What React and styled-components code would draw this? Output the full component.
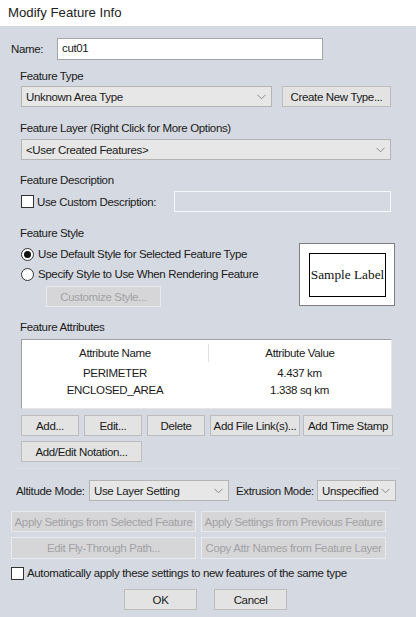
import React from 'react';
import styled, { createGlobalStyle } from 'styled-components';

const GlobalStyle = createGlobalStyle`
  body {
    margin: 0;
    background: #d5d9e1;
    font-family: "Liberation Sans", Arial, sans-serif;
    font-size: 11.5px;
    letter-spacing: -0.35px;
    color: #1a1a1a;
  }
`;

const Dialog = styled.div`
  width: 416px;
  height: 617px;
  background: #d5d9e1;
  overflow: hidden;
`;

const TitleBar = styled.div`
  height: 26px;
  line-height: 25px;
  background: #fff;
  padding-left: 8px;
  font-size: 13.2px;
  letter-spacing: 0;
  color: #222;
`;

const Row = styled.div`
  display: flex;
  align-items: center;
  margin-top: ${p => p.$top || 0}px;
  padding-left: ${p => p.$left || 0}px;
  height: ${p => p.$h || 21}px;
`;

const Label = styled.div`
  height: 14px;
  line-height: 14px;
  margin-top: ${p => p.$top || 0}px;
  padding-left: ${p => p.$left || 20}px;
  white-space: nowrap;
`;

const Text = styled.span`
  white-space: nowrap;
  width: ${p => (p.$w ? p.$w + 'px' : 'auto')};
  margin-left: ${p => p.$ml || 0}px;
  flex: none;
`;

const TextInput = styled.div`
  box-sizing: border-box;
  width: ${p => p.$w}px;
  height: ${p => p.$h || 22}px;
  margin-left: ${p => p.$ml || 0}px;
  background: ${p => (p.$disabled ? 'transparent' : '#fff')};
  border: 1px solid ${p => (p.$disabled ? '#f6f7f9' : '#a2a4a8')};
  padding-left: 4px;
  line-height: 19px;
`;

const SelectBox = styled.div`
  box-sizing: border-box;
  display: flex;
  align-items: center;
  justify-content: space-between;
  width: ${p => p.$w}px;
  height: 21px;
  margin-left: ${p => p.$ml || 0}px;
  background: #e7e7e7;
  border: 1px solid #b4b4b4;
  padding: 0 5px 0 4px;
  white-space: nowrap;
  flex: none;
`;

const Button = styled.div`
  box-sizing: border-box;
  display: flex;
  align-items: center;
  justify-content: center;
  width: ${p => p.$w}px;
  height: ${p => p.$h || 21}px;
  margin-left: ${p => p.$ml || 0}px;
  background: ${p => (p.$disabled ? '#d6d6d8' : '#e3e3e3')};
  border: 1px solid ${p => (p.$disabled ? '#e9eaee' : '#bcbcbc')};
  color: ${p => (p.$disabled ? '#a2a2a4' : '#1a1a1a')};
  white-space: nowrap;
  flex: none;
`;

const Check = styled.span`
  box-sizing: border-box;
  display: inline-block;
  width: 13px;
  height: 13px;
  background: #fff;
  border: 1px solid #333;
  flex: none;
`;

const Radio = styled.span`
  box-sizing: border-box;
  display: inline-flex;
  align-items: center;
  justify-content: center;
  width: 13px;
  height: 13px;
  border-radius: 50%;
  background: #fff;
  border: 1px solid #333;
  flex: none;

  &::after {
    content: '';
    width: 7px;
    height: 7px;
    border-radius: 50%;
    background: ${p => (p.$on ? '#111' : 'transparent')};
  }
`;

const StyleRow = styled.div`
  display: flex;
  margin-top: 1px;
  padding-left: 21px;
  width: 395px;
  box-sizing: border-box;
`;

const RadioColumn = styled.div`
  flex: 1;
  padding-top: 3px;
`;

const RadioRow = styled.div`
  display: flex;
  align-items: center;
  height: 20px;
  gap: 4px;
`;

const SampleFrame = styled.div`
  box-sizing: border-box;
  width: 96px;
  height: 63px;
  margin-top: 2px;
  background: #fff;
  border: 1px solid #7e7e80;
  padding: 9px 8px 9px 9px;
`;

const SampleInner = styled.div`
  box-sizing: border-box;
  height: 44px;
  border: 1px solid #000;
  display: flex;
  align-items: center;
  justify-content: center;
  font-family: "Liberation Serif", "Times New Roman", serif;
  font-size: 13.3px;
  letter-spacing: 0;
  color: #111;
`;

const Table = styled.div`
  box-sizing: border-box;
  margin: 5px 0 0 21px;
  width: 371px;
  height: 70px;
  background: #fff;
  border: 1px solid #a0a0a4;
  border-right-color: #e6e6e6;
  border-bottom-color: #e6e6e6;
  padding-top: 4px;
  text-align: center;
`;

const TableRow = styled.div`
  display: grid;
  grid-template-columns: 186px 1fr;
  height: ${p => p.$h || 17}px;
  line-height: ${p => p.$h || 17}px;
  margin-bottom: ${p => p.$mb || 0}px;
`;

const HeadCell = styled.div`
  border-left: ${p => (p.$divider ? '1px solid #e2e2e2' : 'none')};
`;

const Separator = styled.div`
  margin: 6px 0 0 16px;
  width: 384px;
  height: 1px;
  background: #e0e3e9;
`;

const Chevron = () => (
  <svg width="9" height="6" viewBox="0 0 9 6">
    <path d="M0.5 0.8 L4.5 4.8 L8.5 0.8" fill="none" stroke="#8a8a8a" strokeWidth="1" />
  </svg>
);

const Select = ({ w, ml, children }) => (
  <SelectBox $w={w} $ml={ml}>
    <span>{children}</span>
    <Chevron />
  </SelectBox>
);

export default function App() {
  return (
    <Dialog>
      <GlobalStyle />
      <TitleBar>Modify Feature Info</TitleBar>

      <Row $top={12} $left={11} $h={22}>
        <Text $w={46}>Name:</Text>
        <TextInput $w={266}>cut01</TextInput>
      </Row>

      <Label $top={9}>Feature Type</Label>
      <Row $top={3} $left={21}>
        <Select w={251}>Unknown Area Type</Select>
        <Button $w={109} $ml={10}>Create New Type...</Button>
      </Row>

      <Label $top={14}>Feature Layer (Right Click for More Options)</Label>
      <Row $top={4} $left={21}>
        <Select w={370}>&lt;User Created Features&gt;</Select>
      </Row>

      <Label $top={13}>Feature Description</Label>
      <Row $top={4} $left={21}>
        <Check />
        <Text $w={137} $ml={3}>Use Custom Description:</Text>
        <TextInput $w={217} $h={21} $disabled />
      </Row>

      <Label $top={14}>Feature Style</Label>
      <StyleRow>
        <RadioColumn>
          <RadioRow>
            <Radio $on />
            <span>Use Default Style for Selected Feature Type</span>
          </RadioRow>
          <RadioRow>
            <Radio />
            <span>Specify Style to Use When Rendering Feature</span>
          </RadioRow>
          <Row $top={2} $left={25}>
            <Button $w={115} $disabled>Customize Style...</Button>
          </Row>
        </RadioColumn>
        <SampleFrame>
          <SampleInner>Sample Label</SampleInner>
        </SampleFrame>
      </StyleRow>

      <Label $top={13}>Feature Attributes</Label>
      <Table>
        <TableRow $h={18} $mb={3}>
          <HeadCell>Attribute Name</HeadCell>
          <HeadCell $divider>Attribute Value</HeadCell>
        </TableRow>
        <TableRow>
          <div>PERIMETER</div>
          <div>4.437 km</div>
        </TableRow>
        <TableRow>
          <div>ENCLOSED_AREA</div>
          <div>1.338 sq km</div>
        </TableRow>
      </Table>

      <Row $top={6} $left={21}>
        <Button $w={58}>Add...</Button>
        <Button $w={58} $ml={5}>Edit...</Button>
        <Button $w={58} $ml={5}>Delete</Button>
        <Button $w={90} $ml={5}>Add File Link(s)...</Button>
        <Button $w={90} $ml={3}>Add Time Stamp</Button>
      </Row>
      <Row $top={5} $left={21}>
        <Button $w={121}>Add/Edit Notation...</Button>
      </Row>

      <Separator />

      <Row $top={11} $left={16}>
        <Text $w={73}>Altitude Mode:</Text>
        <Select w={140}>Use Layer Setting</Select>
        <Text $w={81} $ml={7}>Extrusion Mode:</Text>
        <Select w={79}>Unspecified</Select>
      </Row>

      <Row $top={10} $left={11}>
        <Button $w={185} $disabled>Apply Settings from Selected Feature</Button>
        <Button $w={185} $ml={5} $disabled>Apply Settings from Previous Feature</Button>
      </Row>
      <Row $top={5} $left={11} $h={22}>
        <Button $w={185} $h={22} $disabled>Edit Fly-Through Path...</Button>
        <Button $w={185} $h={22} $ml={5} $disabled>Copy Attr Names from Feature Layer</Button>
      </Row>

      <Row $top={7} $left={11} $h={14}>
        <Check />
        <Text $ml={3}>Automatically apply these settings to new features of the same type</Text>
      </Row>

      <Row $top={9} $left={124}>
        <Button $w={73}>OK</Button>
        <Button $w={73} $ml={17}>Cancel</Button>
      </Row>
    </Dialog>
  );
}
